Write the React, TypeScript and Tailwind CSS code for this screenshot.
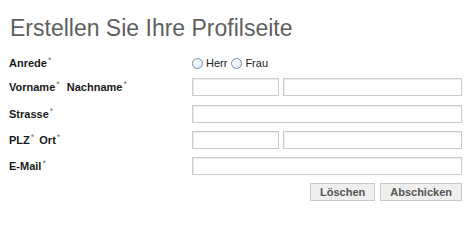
const font = { fontFamily: '"Liberation Sans", Arial, sans-serif' };

function Star() {
  return <span className="ml-[1px] align-top text-[9px] leading-[11px] text-[#777] font-normal">*</span>;
}

function Field({ w }: { w?: string }) {
  return (
    <input
      type="text"
      className={`h-[18px] ${w ?? "flex-1"} border border-[#cbcbcb] bg-white shadow-[inset_1px_1px_0_#ececec] outline-none`}
    />
  );
}

function Radio({ label }: { label: string }) {
  return (
    <label className="flex items-center gap-[3px]">
      <span className="block w-[11px] h-[11px] rounded-full border border-[#6e8cae] bg-gradient-to-br from-[#ffffff] to-[#dfe7ef]" />
      <span>{label}</span>
    </label>
  );
}

export default function App() {
  return (
    <main className="w-[473px] h-[219px] bg-white text-[#1a1a1a]" style={font}>
      <h1 className="pt-[17px] pl-[10px] text-[23px] leading-[23px] font-normal text-[#5f5f5f]">
        Erstellen Sie Ihre Profilseite
      </h1>

      <form className="mt-[13px] pl-[9px] pr-[11px] text-[11px]">
        {/* Anrede */}
        <div className="flex items-center h-[20px]">
          <div className="w-[183px] font-bold">
            Anrede<Star />
          </div>
          <div className="flex items-center gap-[4px] text-[#222]">
            <Radio label="Herr" />
            <Radio label="Frau" />
          </div>
        </div>

        {/* Name */}
        <div className="flex items-center h-[18px] mt-[5px]">
          <div className="w-[183px] font-bold flex gap-[7px]">
            <span>Vorname<Star /></span>
            <span>Nachname<Star /></span>
          </div>
          <div className="flex flex-1 gap-[4px]">
            <Field w="w-[87px]" />
            <Field />
          </div>
        </div>

        {/* Strasse */}
        <div className="flex items-center h-[18px] mt-[9px]">
          <div className="w-[183px] font-bold">
            Strasse<Star />
          </div>
          <div className="flex flex-1">
            <Field />
          </div>
        </div>

        {/* PLZ / Ort */}
        <div className="flex items-center h-[18px] mt-[8px]">
          <div className="w-[183px] font-bold flex gap-[5px]">
            <span>PLZ<Star /></span>
            <span>Ort<Star /></span>
          </div>
          <div className="flex flex-1 gap-[4px]">
            <Field w="w-[87px]" />
            <Field />
          </div>
        </div>

        {/* E-Mail */}
        <div className="flex items-center h-[18px] mt-[8px]">
          <div className="w-[183px] font-bold">
            E-Mail<Star />
          </div>
          <div className="flex flex-1">
            <Field />
          </div>
        </div>

        {/* Buttons */}
        <div className="flex justify-end gap-[5px] mt-[8px]">
          <button
            type="reset"
            className="h-[18px] px-[9px] border border-[#c8c8c8] bg-[#efefef] font-bold text-[#555]"
          >
            Löschen
          </button>
          <button
            type="submit"
            className="h-[18px] px-[9px] border border-[#c8c8c8] bg-[#efefef] font-bold text-[#555]"
          >
            Abschicken
          </button>
        </div>
      </form>
    </main>
  );
}
